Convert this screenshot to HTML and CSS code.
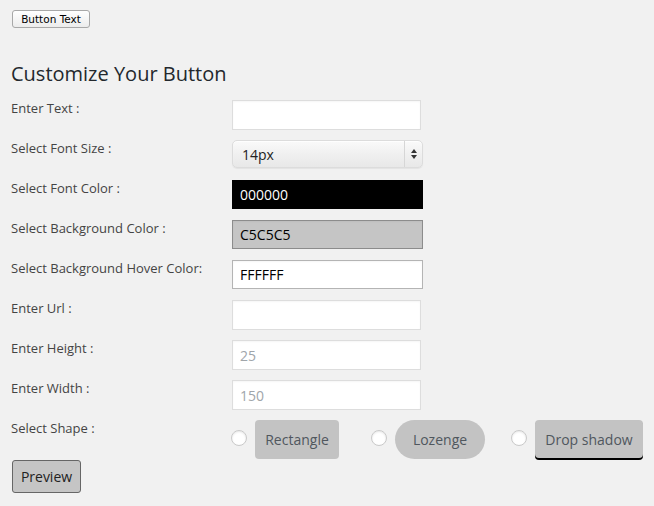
FILE: index.html
```html
<!DOCTYPE html>
<html>
<head>
<meta charset="utf-8">
<link rel="stylesheet" href="styles.css">
</head>
<body>
<div class="page">
  <button class="sample" type="button">Button Text</button>
  <h2 class="title">Customize Your Button</h2>
  <div class="form">
    <div class="row"><label class="lbl">Enter Text :</label><input class="field" type="text"></div>
    <div class="row"><label class="lbl">Select Font Size :</label>
      <div class="select-wrap"><select class="select"><option>14px</option></select><span class="arrows"></span></div>
    </div>
    <div class="row"><label class="lbl">Select Font Color :</label><input class="field wide color-black" type="text" value="000000"></div>
    <div class="row"><label class="lbl">Select Background Color :</label><input class="field wide color-gray" type="text" value="C5C5C5"></div>
    <div class="row"><label class="lbl">Select Background Hover Color:</label><input class="field wide color-white" type="text" value="FFFFFF"></div>
    <div class="row"><label class="lbl">Enter Url :</label><input class="field" type="text"></div>
    <div class="row"><label class="lbl">Enter Height :</label><input class="field" type="text" placeholder="25"></div>
    <div class="row"><label class="lbl">Enter Width :</label><input class="field" type="text" placeholder="150"></div>
    <div class="row shape-row"><label class="lbl">Select Shape :</label>
      <div class="shapes">
        <div class="opt"><span class="radio"></span><span class="shape rect">Rectangle</span></div>
        <div class="opt"><span class="radio"></span><span class="shape lozenge">Lozenge</span></div>
        <div class="opt"><span class="radio"></span><span class="shape shadow">Drop shadow</span></div>
      </div>
    </div>
  </div>
  <button class="preview" type="button">Preview</button>
</div>
</body>
</html>
```

FILE: styles.css
```css
html, body {
  margin: 0;
  padding: 0;
  background: #f1f1f1;
}
.page {
  padding: 10px 0 0 12px;
  font-family: "Open Sans", sans-serif;
  color: #444;
}
.sample {
  display: block;
  width: 78px;
  height: 18px;
  padding: 0;
  margin: 0;
  font-family: "DejaVu Sans", sans-serif;
  font-size: 10.5px;
  color: #000;
  background: linear-gradient(#ffffff, #ececec);
  border: 1px solid #a8a8a8;
  border-radius: 3px;
}
.title {
  margin: 33px 0 0 -1px;
  font-size: 20px;
  line-height: 26px;
  font-weight: 400;
  color: #23282d;
}
.form {
  margin-top: 13px;
  margin-left: -1px;
}
.row {
  display: flex;
  align-items: flex-start;
  height: 40px;
}
.lbl {
  width: 221px;
  font-size: 13px;
  line-height: 18px;
  margin-top: -1px;
  color: #444;
}
.field {
  box-sizing: border-box;
  width: 189px;
  height: 30px;
  margin: 0;
  padding: 0 7px;
  font-family: "Open Sans", sans-serif;
  font-size: 14px;
  color: #32373c;
  background: #fff;
  border: 1px solid #ddd;
  box-shadow: inset 0 1px 2px rgba(0,0,0,0.04);
  outline: none;
}
.field::placeholder { color: #a0a5aa; }
.field.wide { width: 191px; height: 29px; }
.color-black { background: #000; color: #fff; border-color: #000; }
.color-gray { background: #c5c5c5; color: #000; border-color: #8c8c8c; }
.color-white { background: #fff; color: #000; border-color: #b4b4b4; }
.select-wrap {
  position: relative;
  width: 191px;
  height: 28px;
}
.select {
  -webkit-appearance: none;
  appearance: none;
  box-sizing: border-box;
  width: 191px;
  height: 28px;
  margin: 0;
  padding: 0 0 0 9px;
  font-family: "Open Sans", sans-serif;
  font-size: 14px;
  color: #222;
  background: linear-gradient(#fafafa, #f0f0f0 50%, #e8e8e8);
  border: 1px solid #dcdcdc;
  border-radius: 5px;
  box-shadow: inset 0 1px 1px rgba(255,255,255,0.8), 0 1px 1px rgba(0,0,0,0.06);
}
.arrows {
  position: absolute;
  right: 0;
  top: 1px;
  width: 18px;
  height: 26px;
  border-left: 1px solid #d6d6d6;
}
.arrows::before, .arrows::after {
  content: "";
  position: absolute;
  left: 6px;
  border-left: 3.5px solid transparent;
  border-right: 3.5px solid transparent;
}
.arrows::before { top: 8px; border-bottom: 4px solid #333; }
.arrows::after { top: 14px; border-top: 4px solid #333; }
.shape-row { height: 40px; }
.shapes {
  display: grid;
  grid-template-columns: 140px 140px 140px;
  margin-left: -1px;
}
.opt {
  display: flex;
  align-items: flex-start;
}
.radio {
  box-sizing: border-box;
  width: 16px;
  height: 16px;
  margin-top: 10px;
  margin-right: 8px;
  border-radius: 50%;
  background: #fff;
  border: 1px solid #c9c9c9;
  box-shadow: inset 0 1px 2px rgba(0,0,0,0.1);
}
.shape {
  box-sizing: border-box;
  height: 39px;
  display: flex;
  align-items: center;
  justify-content: center;
  font-size: 14px;
  color: #50575e;
  background: #c3c3c3;
}
.rect { width: 84px; border-radius: 4px; }
.lozenge { width: 90px; border-radius: 20px; }
.shadow {
  width: 108px;
  height: 38px;
  border-radius: 4px;
  box-shadow: 0 2px 0 #000;
}
.preview {
  display: block;
  box-sizing: border-box;
  width: 69px;
  height: 33px;
  margin: 0;
  padding: 0;
  font-family: "Open Sans", sans-serif;
  font-size: 14px;
  color: #222;
  background: #c5c5c5;
  border: 1px solid #666;
  border-radius: 3px;
}
```
